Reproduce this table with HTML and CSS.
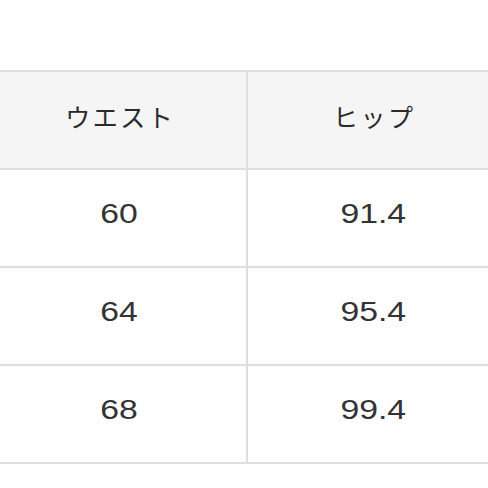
FILE: index.html
```html
<!DOCTYPE html>
<html lang="ja">
<head>
<meta charset="utf-8">
<link rel="stylesheet" href="styles.css">
</head>
<body>
<table class="size-table">
  <thead>
    <tr><th><span class="kana">ウエスト</span></th><th><span class="kana">ヒップ</span></th></tr>
  </thead>
  <tbody>
    <tr><td><span class="num">60</span></td><td><span class="num">91.4</span></td></tr>
    <tr><td><span class="num">64</span></td><td><span class="num">95.4</span></td></tr>
    <tr><td><span class="num">68</span></td><td><span class="num">99.4</span></td></tr>
  </tbody>
</table>
</body>
</html>
```
FILE: styles.css
```css
html, body {
  margin: 0;
  padding: 0;
  background: #fff;
  overflow: hidden;
}
.size-table {
  margin-top: 70px;
  margin-left: -10px;
  width: 510px;
  border-collapse: collapse;
  table-layout: fixed;
  font-family: "Liberation Sans", "Noto Sans CJK JP", sans-serif;
  font-size: 25px;
  color: #2b2b2b;
}
.size-table th,
.size-table td {
  border: 2px solid #dddddd;
  height: 88px;
  padding: 0 0 8px 0;
  text-align: center;
  vertical-align: middle;
  font-weight: normal;
}
.size-table th:first-child,
.size-table td:first-child {
  width: 254px;
}
.size-table th {
  background: #f5f5f5;
}
.kana {
  font-family: "Noto Sans CJK JP", sans-serif;
  letter-spacing: 2.5px;
  padding-left: 2.5px;
}
.num {
  display: inline-block;
  font-size: 27px;
  color: #333;
  transform: scaleX(1.25);
}
```
